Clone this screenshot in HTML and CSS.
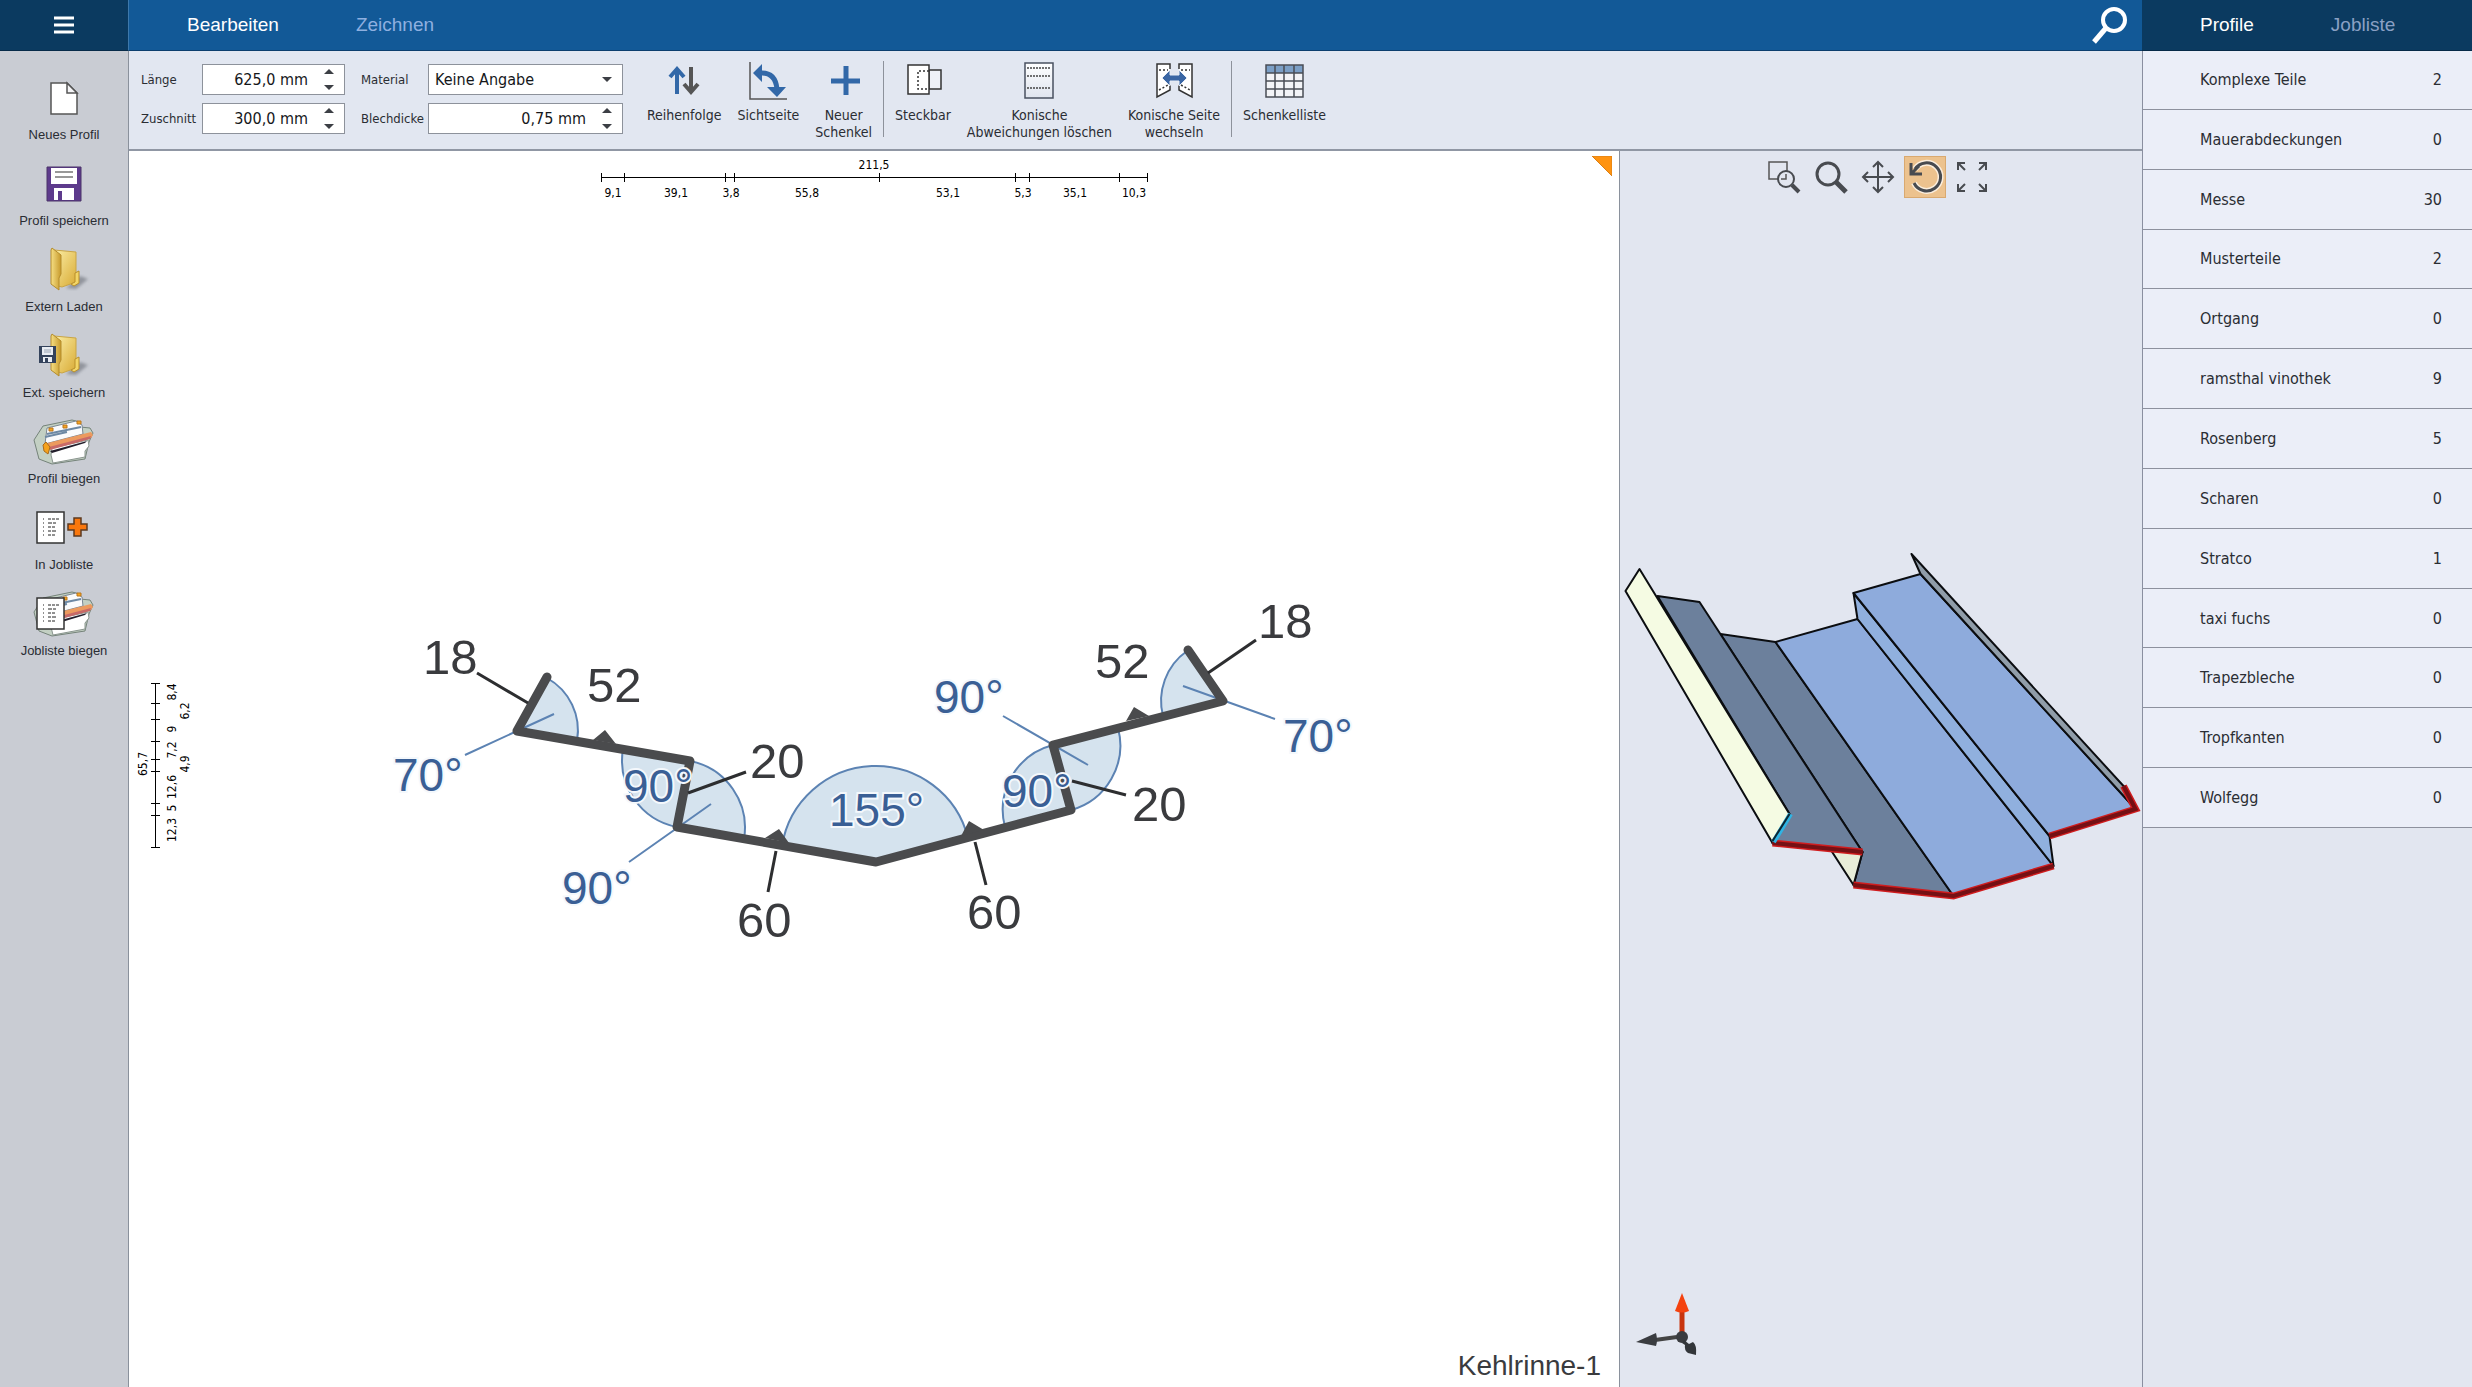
FILE: index.html
```html
<!DOCTYPE html>
<html lang="de">
<head>
    <meta charset="UTF-8">
    <meta name="viewport" content="width=device-width, initial-scale=1.0">
    <title>Kehlrinne-1</title>
    <link rel="stylesheet" href="styles.css">
</head>
<body>
    <!-- shared symbols -->
    <svg class="symbols" aria-hidden="true">
        <defs>
            <linearGradient id="gold" x1="0" x2="1" y1="0" y2="1">
                <stop offset="0" stop-color="#fbeea6"/>
                <stop offset="1" stop-color="#d9ab35"/>
            </linearGradient>
            <linearGradient id="goldDark" x1="0" x2="1">
                <stop offset="0" stop-color="#f6df84"/>
                <stop offset="1" stop-color="#c79a2c"/>
            </linearGradient>
            <linearGradient id="sheet" x1="0" x2="0" y1="0" y2="1">
                <stop offset="0" stop-color="#ffffff"/>
                <stop offset="1" stop-color="#dfe4ee"/>
            </linearGradient>
            <filter id="soft"><feGaussianBlur stdDeviation="1.5"/></filter>
        </defs>
        <symbol id="folder" viewBox="0 0 64 48">
            <path d="M34 42L48 30l8 3-12 10z" fill="#6c7078" opacity="0.6" filter="url(#soft)"/>
            <path d="M22 4l22 2v30l-14 5-8-2z" fill="url(#gold)" stroke="#c9a545"/>
            <path d="M43 27l4-2v12l-5 3-3-2 4-2z" fill="#f2d566" stroke="#b98f2b"/>
            <path d="M20 2l9 7v19l-2 4v12l-8-6V4z" fill="url(#goldDark)" stroke="#b48c2c"/>
        </symbol>
        <symbol id="machine" viewBox="0 0 64 48">
            <path d="M11 8L2 22l5 19 13 5 33-5 4-17 4-9-3-5-10-1V4l-8-2z" fill="#c3d0c3" stroke="#75837a"/>
            <path d="M15 10l29-7 6 4 1 9-38 10z" fill="#fafbfc" stroke="#7a8793"/>
            <path d="M15 16l34-7M13 19l22-5" stroke="#6d89a4" stroke-width="2" fill="none"/>
            <path d="M20 30l36-8 1 6-4 5v6l-32 6-2-8z" fill="#fff" stroke="#8a958f"/>
            <path d="M16 25l43-11 2 3-2 3-43 11z" fill="#ec9a5e"/>
            <path d="M17 29l42-11-1 3-40 11z" fill="#c86a68"/>
            <path d="M18 33l37-10-2 2-33 10z" fill="#231e2b"/>
            <path d="M14 24l4 5-2 7-4-3-1-6z" fill="#f5a21b" stroke="#a86b1a"/>
            <path d="M17 10h4v3h-4zM31 7h4v3h-4zM45 3h4v3h-4z" fill="#f7a61e" stroke="#b8741c"/>
        </symbol>
        <symbol id="joblist" viewBox="0 0 64 48">
            <path d="M5 8h27v31H5z" fill="#fff" stroke="#333" stroke-width="1.5"/>
            <path d="M11 15h1M16 15h3m1 0h3m1 0h3M11 19h1M16 19h4m1 0h3M11 23h1M16 23h3m1 0h3M11 27h1M16 27h3m1 0h4M11 31h1M16 31h3m1 0h3" stroke="#222"/>
        </symbol>
        <symbol id="tri-up" viewBox="0 0 10 5"><path d="M0 5l5-5 5 5z" fill="#3c3f45"/></symbol>
        <symbol id="tri-down" viewBox="0 0 10 5"><path d="M0 0l5 5 5-5z" fill="#3c3f45"/></symbol>
    </svg>

    <div class="app">
        <button class="menu-button" aria-label="Menü">
            <svg width="20" height="18" viewBox="0 0 20 18"><path d="M0 2h20M0 9h20M0 16h20" stroke="#fff" stroke-width="3"/></svg>
        </button>

        <header class="topbar">
            <nav class="tabs">
                <button class="tab active">Bearbeiten</button>
                <button class="tab">Zeichnen</button>
            </nav>
            <button class="search" aria-label="Suchen">
                <svg width="40" height="40" viewBox="0 0 40 40">
                    <circle cx="24" cy="15" r="11" fill="none" stroke="#fff" stroke-width="4"/>
                    <path d="M16 23L4 37" stroke="#fff" stroke-width="5"/>
                </svg>
            </button>
        </header>

        <nav class="panel-tabs tabs">
            <button class="tab active">Profile</button>
            <button class="tab">Jobliste</button>
        </nav>

        <aside class="sidebar">
            <button class="side-item">
                <svg viewBox="0 0 64 48"><path d="M19 9h16l10 10v21H19z" fill="#fff" stroke="#555" stroke-width="1.5"/><path d="M35 9v10h10z" fill="#f4f4f6" stroke="#555" stroke-width="1.5"/></svg>
                <span>Neues Profil</span>
            </button>
            <button class="side-item">
                <svg viewBox="0 0 64 48">
                    <path d="M15 7h34v34H15z" fill="#5d3a8c" stroke="#4a3268"/>
                    <path d="M19 8h26v16H19zM22 28h20v12H22z" fill="#fff"/>
                    <path d="M26 31h4v9h-4z" fill="#5d3a8c"/>
                    <path d="M23 12h18M23 17h18" stroke="#777" stroke-width="1.5"/>
                </svg>
                <span>Profil speichern</span>
            </button>
            <button class="side-item">
                <svg viewBox="0 0 64 48"><use href="#folder"/></svg>
                <span>Extern Laden</span>
            </button>
            <button class="side-item">
                <svg viewBox="0 0 64 48">
                    <use href="#folder"/>
                    <path d="M7 14h17v17H7z" fill="#34435c"/>
                    <path d="M10 15h11v8H10zM11 25h9v5h-9z" fill="#e9edf3"/>
                    <path d="M13 26h3v4h-3z" fill="#34435c"/>
                    <path d="M12 18h7M12 20h7" stroke="#9aa5b5"/>
                </svg>
                <span>Ext. speichern</span>
            </button>
            <button class="side-item">
                <svg viewBox="0 0 64 48"><use href="#machine"/></svg>
                <span>Profil biegen</span>
            </button>
            <button class="side-item">
                <svg viewBox="0 0 64 48"><use href="#joblist"/><path d="M42 14h7v6h6v6h-6v6h-7v-6h-6v-6h6z" fill="#f9770d" stroke="#5c3a20" stroke-width="1.5"/></svg>
                <span>In Jobliste</span>
            </button>
            <button class="side-item">
                <svg viewBox="0 0 64 48"><use href="#machine"/><use href="#joblist"/></svg>
                <span>Jobliste biegen</span>
            </button>
        </aside>

        <div class="toolbar">
            <form class="fields">
                <label for="laenge">Länge</label>
                <div class="spin">
                    <input type="text" id="laenge" value="625,0 mm">
                    <div class="spin-buttons">
                        <button type="button" aria-label="Länge erhöhen"><svg width="10" height="5"><use href="#tri-up"/></svg></button>
                        <button type="button" aria-label="Länge verringern"><svg width="10" height="5"><use href="#tri-down"/></svg></button>
                    </div>
                </div>
                <label class="second" for="material">Material</label>
                <div class="select">
                    <select id="material"><option>Keine Angabe</option></select>
                    <svg width="10" height="5"><use href="#tri-down"/></svg>
                </div>
                <label for="zuschnitt">Zuschnitt</label>
                <div class="spin">
                    <input type="text" id="zuschnitt" value="300,0 mm">
                    <div class="spin-buttons">
                        <button type="button" aria-label="Zuschnitt erhöhen"><svg width="10" height="5"><use href="#tri-up"/></svg></button>
                        <button type="button" aria-label="Zuschnitt verringern"><svg width="10" height="5"><use href="#tri-down"/></svg></button>
                    </div>
                </div>
                <label class="second" for="blechdicke">Blechdicke</label>
                <div class="spin">
                    <input type="text" id="blechdicke" value="0,75 mm">
                    <div class="spin-buttons">
                        <button type="button" aria-label="Blechdicke erhöhen"><svg width="10" height="5"><use href="#tri-up"/></svg></button>
                        <button type="button" aria-label="Blechdicke verringern"><svg width="10" height="5"><use href="#tri-down"/></svg></button>
                    </div>
                </div>
            </form>

            <div class="tools">
                <button class="tool">
                    <svg viewBox="0 0 40 40">
                        <path d="M13 33V8M6 16l7-8 7 8" fill="none" stroke="#3268a8" stroke-width="4"/>
                        <path d="M27 6v25M20 23l7 8 7-8" fill="none" stroke="#555" stroke-width="4"/>
                    </svg>
                    Reihenfolge
                </button>
                <button class="tool">
                    <svg viewBox="0 0 40 40">
                        <path d="M2 1v37h37" fill="none" stroke="#555" stroke-width="1.5"/>
                        <path d="M14 12c9 0 14 6 15 16" fill="none" stroke="#3268a8" stroke-width="5"/>
                        <path d="M5 12l9-9v18zM19 26h19l-9 10z" fill="#3268a8"/>
                    </svg>
                    Sichtseite
                </button>
                <button class="tool">
                    <svg viewBox="0 0 40 40"><path d="M22 5v29M7 20h29" stroke="#3268a8" stroke-width="5"/></svg>
                    Neuer<br>Schenkel
                </button>
                <div class="divider"></div>
                <button class="tool">
                    <svg viewBox="0 0 40 40">
                        <path d="M26 9h12v19H26z" fill="#eef1f7" stroke="#333" stroke-width="1.5"/>
                        <path d="M5 4h21v29H5z" fill="#fff" stroke="#333" stroke-width="1.5"/>
                        <path d="M26 10H15v18h11" fill="none" stroke="#333" stroke-width="1.5" stroke-dasharray="2 2"/>
                    </svg>
                    Steckbar
                </button>
                <button class="tool">
                    <svg viewBox="0 0 40 40">
                        <path d="M6 2h28v35H6z" fill="url(#sheet)" stroke="#4a5160" stroke-width="1.5"/>
                        <path d="M8 7h24M8 15h24M8 27h24" stroke="#444" stroke-width="1.5" stroke-dasharray="2 1"/>
                    </svg>
                    Konische<br>Abweichungen löschen
                </button>
                <button class="tool">
                    <svg viewBox="0 0 40 40">
                        <path d="M16 8V3H3v33l13-7v-5M25 8V3h13v33l-13-7v-5" fill="#fff" stroke="#333" stroke-width="1.5"/>
                        <path d="M5 9h9M5 29l9-5M27 9h9M27 24l9 5" stroke="#333" stroke-width="1.5" stroke-dasharray="2 2"/>
                        <path d="M8 17l8-8v5h9V9l8 8-8 8v-5h-9v5z" fill="#3a66a4" stroke="#e8edf5"/>
                    </svg>
                    Konische Seite<br>wechseln
                </button>
                <div class="divider"></div>
                <button class="tool">
                    <svg viewBox="0 0 40 40">
                        <path d="M2 4h37v32H2z" fill="#f3f4f7"/>
                        <path d="M2 4h37v8H2z" fill="#7b9fc6"/>
                        <path d="M2 4h37v32H2zM2 12h37M2 20h37M2 28h37M11 4v32M20 4v32M30 4v32" fill="none" stroke="#4a4d55" stroke-width="1.5"/>
                    </svg>
                    Schenkelliste
                </button>
            </div>
        </div>

        <main class="canvas">
            <svg class="drawing" viewBox="129 151 1490 1236" preserveAspectRatio="xMidYMid meet">
                <!-- horizontal ruler -->
                <g class="ruler">
                    <path d="M601 177.5h546M601 173v9M624.5 173v9M725.5 173v9M734.5 173v9M879.5 173v9M1015.5 173v9M1029.5 173v9M1119.5 173v9M1147 173v9"/>
                    <text x="874" y="169">211,5</text>
                    <text x="613" y="197">9,1</text>
                    <text x="676" y="197">39,1</text>
                    <text x="731" y="197">3,8</text>
                    <text x="807" y="197">55,8</text>
                    <text x="948" y="197">53,1</text>
                    <text x="1023" y="197">5,3</text>
                    <text x="1075" y="197">35,1</text>
                    <text x="1134" y="197">10,3</text>
                </g>
                <!-- vertical ruler -->
                <g class="ruler">
                    <path d="M155.5 683v164M151 683h9M151 703.5h9M151 719.5h9M151 741.5h9M151 759.5h9M151 771.5h9M151 803.5h9M151 815.5h9M151 847h9"/>
                    <text transform="translate(147 764) rotate(-90)">65,7</text>
                    <text transform="translate(176 692) rotate(-90)">8,4</text>
                    <text transform="translate(189 711) rotate(-90)">6,2</text>
                    <text transform="translate(176 729) rotate(-90)">9</text>
                    <text transform="translate(176 750) rotate(-90)">7,2</text>
                    <text transform="translate(189 764) rotate(-90)">4,9</text>
                    <text transform="translate(176 787) rotate(-90)">12,6</text>
                    <text transform="translate(176 808) rotate(-90)">5</text>
                    <text transform="translate(176 830) rotate(-90)">12,3</text>
                </g>
                <!-- angle sectors -->
                <g class="sector">
                    <path d="M517 730L547 678A60 60 0 0 1 577 741z"/>
                    <path d="M690 761L623 749A68 68 0 0 0 677 827z"/>
                    <path d="M677 827L690 761A68 68 0 0 1 744 839z"/>
                    <path d="M876 862L782 846A95 95 0 0 1 968 838z"/>
                    <path d="M1071 810L1005 827A67 67 0 0 1 1053 745z"/>
                    <path d="M1053 745L1118 728A67 67 0 0 1 1071 810z"/>
                    <path d="M1223 701L1163 716A61 61 0 0 1 1187 651z"/>
                </g>
                <g class="arc">
                    <path d="M547 678A60 60 0 0 1 577 741"/>
                    <path d="M623 749A68 68 0 0 0 677 827"/>
                    <path d="M690 761A68 68 0 0 1 744 839"/>
                    <path d="M782 846A95 95 0 0 1 968 838"/>
                    <path d="M1005 827A67 67 0 0 1 1053 745"/>
                    <path d="M1118 728A67 67 0 0 1 1071 810"/>
                    <path d="M1163 716A61 61 0 0 1 1187 651"/>
                    <path d="M465 755L517 731L554 714M629 862L711 804M1003 716L1088 765M1183 686L1275 719"/>
                </g>
                <!-- sheet profile -->
                <path class="profile" d="M547 677L517 731L690 761L677 827L876 862L1071 810L1053 745L1223 701L1188 650"/>
                <path class="marker" d="M593 740l12-10 11 14zM765 838l14-9 10 14zM961 836l8-15 15 9zM1126 721l8-14 15 9z"/>
                <path class="leader" d="M477 673L528 703M688 793L746 772M776 851L768 892M975 842L986 885M1072 781L1126 795M1208 673L1256 640"/>
                <g class="length">
                    <text x="423" y="674">18</text>
                    <text x="587" y="702">52</text>
                    <text x="750" y="778">20</text>
                    <text x="737" y="937">60</text>
                    <text x="967" y="929">60</text>
                    <text x="1132" y="821">20</text>
                    <text x="1095" y="678">52</text>
                    <text x="1258" y="638">18</text>
                </g>
                <g class="angle">
                    <text x="393" y="791">70°</text>
                    <text x="562" y="904">90°</text>
                    <text x="623" y="802">90°</text>
                    <text x="829" y="826">155°</text>
                    <text x="1002" y="807">90°</text>
                    <text x="934" y="713">90°</text>
                    <text x="1283" y="752">70°</text>
                </g>
            </svg>
            <svg class="corner" width="20" height="20" viewBox="0 0 20 20"><path d="M0 0h20v20z" fill="#ff9310" stroke="#d97f16"/></svg>
            <p class="profile-name">Kehlrinne-1</p>
        </main>

        <section class="viewer">
            <div class="view-tools">
                <button class="view-tool" aria-label="Zoom Bereich">
                    <svg viewBox="0 0 42 42">
                        <path d="M15 23H6V6h18v9" fill="none" stroke="#555" stroke-width="1.5"/>
                        <circle cx="23" cy="23" r="8" fill="none" stroke="#484b50" stroke-width="2"/>
                        <path d="M18 23h5v-5" fill="none" stroke="#555" stroke-width="1.5"/>
                        <path d="M29 29l7 7" stroke="#484b50" stroke-width="4"/>
                    </svg>
                </button>
                <button class="view-tool" aria-label="Zoom">
                    <svg viewBox="0 0 42 42">
                        <circle cx="18" cy="18" r="11" fill="none" stroke="#484b50" stroke-width="3"/>
                        <path d="M26 26l10 10" stroke="#484b50" stroke-width="5"/>
                    </svg>
                </button>
                <button class="view-tool" aria-label="Verschieben">
                    <svg viewBox="0 0 42 42"><path d="M21 6v30M6 21h30M16 11l5-5 5 5M16 31l5 5 5-5M11 16l-5 5 5 5M31 16l5 5-5 5" fill="none" stroke="#484b50" stroke-width="2"/></svg>
                </button>
                <button class="view-tool active" aria-label="Drehen">
                    <svg viewBox="0 0 42 42">
                        <path d="M11 13a14 14 0 1 1-1 14" fill="none" stroke="#fbeedd" stroke-width="6"/>
                        <path d="M11 13a14 14 0 1 1-1 14" fill="none" stroke="#484b50" stroke-width="3"/>
                        <path d="M7 7v11h11M8 17l7-7" fill="none" stroke="#484b50" stroke-width="3"/>
                    </svg>
                </button>
                <button class="view-tool" aria-label="Einpassen">
                    <svg viewBox="0 0 42 42">
                        <path d="M7 14V7h7M7 7l7 7M28 7h7v7M35 7l-7 7M7 28v7h7M7 35l7-7M28 35h7v-7M35 35l-7-7" fill="none" stroke="#484b50" stroke-width="2"/>
                    </svg>
                </button>
            </div>
            <svg class="model" viewBox="1621 203 521 1184" preserveAspectRatio="xMidYMid meet">
                <g class="faces">
                    <path fill="#6c809c" d="M1721 634L1776 642L1954 896L1854 885L1863 852z"/>
                    <path fill="#e8edd8" d="M1832 851L1863 852L1854 885z"/>
                    <path fill="#6c809c" d="M1658 596L1700 602L1863 852L1773 843L1790 814z"/>
                    <path fill="#f5fbe3" d="M1640 569L1626 591L1773 843L1790 814z"/>
                    <path fill="#8eabdc" d="M1776 642L1858 619L2054 866L1954 896z"/>
                    <path fill="#90b0de" d="M1858 619L1854 593L2050 836L2054 866z"/>
                    <path fill="#8eabdc" d="M1854 593L1921 574L2136 809L2050 836z"/>
                    <path fill="#909da9" d="M1912 554L2124 786L2136 809L1921 574z"/>
                </g>
                <g class="cut">
                    <path d="M1773 843L1863 852M1854 885L1954 896L2054 866M2050 836L2136 809L2124 786"/>
                    <path class="cut-core" d="M1773 843L1863 852M1854 885L1954 896L2054 866M2050 836L2136 809L2124 786"/>
                </g>
                <path d="M1774 842L1791 814" stroke="#2fb4e4" stroke-width="5"/>
                <path d="M1773 841L1790 814" stroke="#0c2733" stroke-width="2"/>
            </svg>
            <svg class="axes" width="64" height="64" viewBox="1630 1286 64 64">
                <path d="M1682 1310v24" stroke="#c8340e" stroke-width="5"/>
                <path d="M1682 1293l7 18q-7 3-14 0z" fill="#f4420f"/>
                <path d="M1655 1340l22-3" stroke="#444" stroke-width="4"/>
                <path d="M1636 1342l20-9q2 7 0 13z" fill="#3a3c40"/>
                <circle cx="1682" cy="1337" r="6" fill="#3a3c40"/>
                <path d="M1684 1340l5 4 4-2q4 3 3 13l-8-2q-4-3-3-8l-3-2z" fill="#33363a"/>
            </svg>
        </section>

        <aside class="panel">
            <table>
                <tr><td>Komplexe Teile</td><td>2</td></tr>
                <tr><td>Mauerabdeckungen</td><td>0</td></tr>
                <tr><td>Messe</td><td>30</td></tr>
                <tr><td>Musterteile</td><td>2</td></tr>
                <tr><td>Ortgang</td><td>0</td></tr>
                <tr><td>ramsthal vinothek</td><td>9</td></tr>
                <tr><td>Rosenberg</td><td>5</td></tr>
                <tr><td>Scharen</td><td>0</td></tr>
                <tr><td>Stratco</td><td>1</td></tr>
                <tr><td>taxi fuchs</td><td>0</td></tr>
                <tr><td>Trapezbleche</td><td>0</td></tr>
                <tr><td>Tropfkanten</td><td>0</td></tr>
                <tr><td>Wolfegg</td><td>0</td></tr>
            </table>
        </aside>
    </div>
</body>
</html>
```
FILE: styles.css
```css
* {
    box-sizing: border-box;
}

body {
    margin: 0;
    font-family: 'DejaVu Sans Condensed', 'DejaVu Sans', sans-serif;
    font-size: 14px;
    color: #2a2d33;
    background-color: #e2e6f0;
}

button {
    padding: 0;
    border: none;
    background: none;
    font: inherit;
    color: inherit;
    cursor: pointer;
}

.symbols {
    display: block;
    width: 0;
    height: 0;
}

.app {
    display: grid;
    grid-template-columns: 129px 1fr 522px 330px;
    grid-template-rows: 51px 100px 1fr;
    grid-template-areas:
        "menu top top tabs"
        "side tool tool panel"
        "side canvas viewer panel";
    height: 100vh;
}

/* top bar */
.menu-button {
    grid-area: menu;
    display: flex;
    align-items: center;
    justify-content: center;
    background-color: #0b3a60;
    border-right: 1px solid #3d78ab;
    border-bottom: 1px solid #062a48;
}

.topbar {
    grid-area: top;
    display: flex;
    justify-content: space-between;
    align-items: center;
    padding: 0 12px 0 58px;
    background-color: #125997;
    border-bottom: 1px solid #0c3f6e;
}

.tabs {
    display: flex;
    align-items: center;
    gap: 77px;
}

.panel-tabs {
    grid-area: tabs;
    padding-left: 58px;
    background-color: #0b3a60;
    border-bottom: 1px solid #062a48;
}

.tab {
    font-family: 'Liberation Sans', Arial, sans-serif;
    font-size: 19px;
    line-height: 24px;
    color: #8fb0e0;
}

.panel-tabs .tab {
    color: #8aa0c4;
}

.tabs .tab.active {
    color: #fff;
}

.search svg {
    display: block;
}

/* left sidebar */
.sidebar {
    grid-area: side;
    display: flex;
    flex-direction: column;
    padding-top: 13px;
    background-color: #c9ccd3;
    border-right: 1px solid #8a919c;
}

.side-item {
    display: flex;
    flex-direction: column;
    align-items: center;
    gap: 4px;
    height: 86px;
    padding-top: 10px;
    font-family: 'Liberation Sans', Arial, sans-serif;
    font-size: 13px;
    line-height: 18px;
}

.side-item svg {
    width: 64px;
    height: 48px;
}

/* toolbar */
.toolbar {
    grid-area: tool;
    display: flex;
    align-items: flex-start;
    gap: 16px;
    padding: 10px 12px;
    background-color: #e2e7f1;
    border-bottom: 2px solid #9097a4;
}

.fields {
    display: grid;
    grid-template-columns: 61px 143px 83px 195px;
    gap: 8px 0;
    align-items: center;
    padding-top: 3px;
    font-size: 13px;
}

.fields .second {
    padding-left: 16px;
}

.spin, .select {
    display: flex;
    align-items: center;
    height: 31px;
    background-color: #fff;
    border: 1px solid #8d929b;
}

.spin input, .select select {
    flex: 1;
    min-width: 0;
    padding: 0;
    border: none;
    outline: none;
    background: none;
    font: inherit;
    font-size: 16px;
    color: #15171a;
}

.spin input {
    text-align: right;
}

.select select {
    appearance: none;
    padding-left: 6px;
}

.select svg {
    margin-right: 10px;
}

.spin-buttons {
    display: flex;
    flex-direction: column;
    align-items: flex-end;
    gap: 11px;
    width: 36px;
    padding-right: 10px;
}

.spin-buttons svg {
    display: block;
}

.tools {
    display: flex;
    align-items: flex-start;
}

.tool {
    padding: 0 8px;
    line-height: 17px;
}

.tool svg {
    display: block;
    width: 40px;
    height: 40px;
    margin: 0 auto 6px;
}

.divider {
    width: 1px;
    height: 76px;
    margin: 0 3px;
    background-color: #8d929b;
}

/* drawing area */
.canvas {
    grid-area: canvas;
    position: relative;
    min-width: 0;
    min-height: 0;
    background-color: #fff;
    border-right: 1px solid #8a919c;
}

.drawing {
    display: block;
    width: 100%;
    height: 100%;
}

.ruler path {
    stroke: #000;
    stroke-width: 1;
    shape-rendering: crispEdges;
}

.ruler text {
    font-size: 12px;
    text-anchor: middle;
    fill: #000;
}

.sector path {
    fill: #d5e3ee;
}

.arc path {
    fill: none;
    stroke: #5c83b3;
    stroke-width: 2;
}

.profile {
    fill: none;
    stroke: #4a4b4d;
    stroke-width: 9;
    stroke-linecap: round;
    stroke-linejoin: round;
}

.marker {
    fill: #4a4b4d;
}

.leader {
    stroke: #2d2e30;
    stroke-width: 3;
}

.length, .angle, .profile-name {
    font-family: 'Liberation Sans', Arial, sans-serif;
}

.length {
    font-size: 49px;
    fill: #3a3b3e;
}

.angle {
    font-size: 46px;
    fill: #3a5f95;
    stroke: #f4f8fc;
    stroke-width: 4;
    paint-order: stroke;
}

.corner {
    position: absolute;
    top: 5px;
    right: 7px;
}

.profile-name {
    position: absolute;
    right: 18px;
    bottom: 5px;
    margin: 0;
    font-size: 28px;
    line-height: 32px;
    color: #3a3b3e;
}

/* 3D view */
.viewer {
    grid-area: viewer;
    position: relative;
    display: flex;
    flex-direction: column;
    min-height: 0;
    background-color: #e2e6f0;
}

.view-tools {
    display: flex;
    justify-content: center;
    gap: 5px;
    padding: 5px 6px 5px 0;
}

.view-tool {
    width: 42px;
    height: 42px;
}

.view-tool svg {
    display: block;
}

.view-tool.active {
    background-color: #ecc28e;
    box-shadow: inset 0 0 0 1px #d9a970;
}

.model {
    flex: 1;
    min-height: 0;
    width: 100%;
}

.faces path {
    stroke: #0b0d10;
    stroke-width: 2;
    stroke-linejoin: round;
}

.cut path {
    fill: none;
    stroke: #d01c1e;
    stroke-width: 7;
}

.cut .cut-core {
    stroke: #751014;
    stroke-width: 4;
}

.axes {
    position: absolute;
    left: 10px;
    bottom: 37px;
    overflow: visible;
}

/* profile list */
.panel {
    grid-area: panel;
    border-left: 1px solid #8a8fa0;
}

.panel table {
    width: 100%;
    height: 777px;
    border-collapse: collapse;
    font-size: 16px;
}

.panel td {
    padding: 0 30px 0 57px;
    background-color: #ebeef8;
    border-bottom: 1px solid #8d919e;
}

.panel td:last-child {
    padding-left: 0;
    text-align: right;
}
```
